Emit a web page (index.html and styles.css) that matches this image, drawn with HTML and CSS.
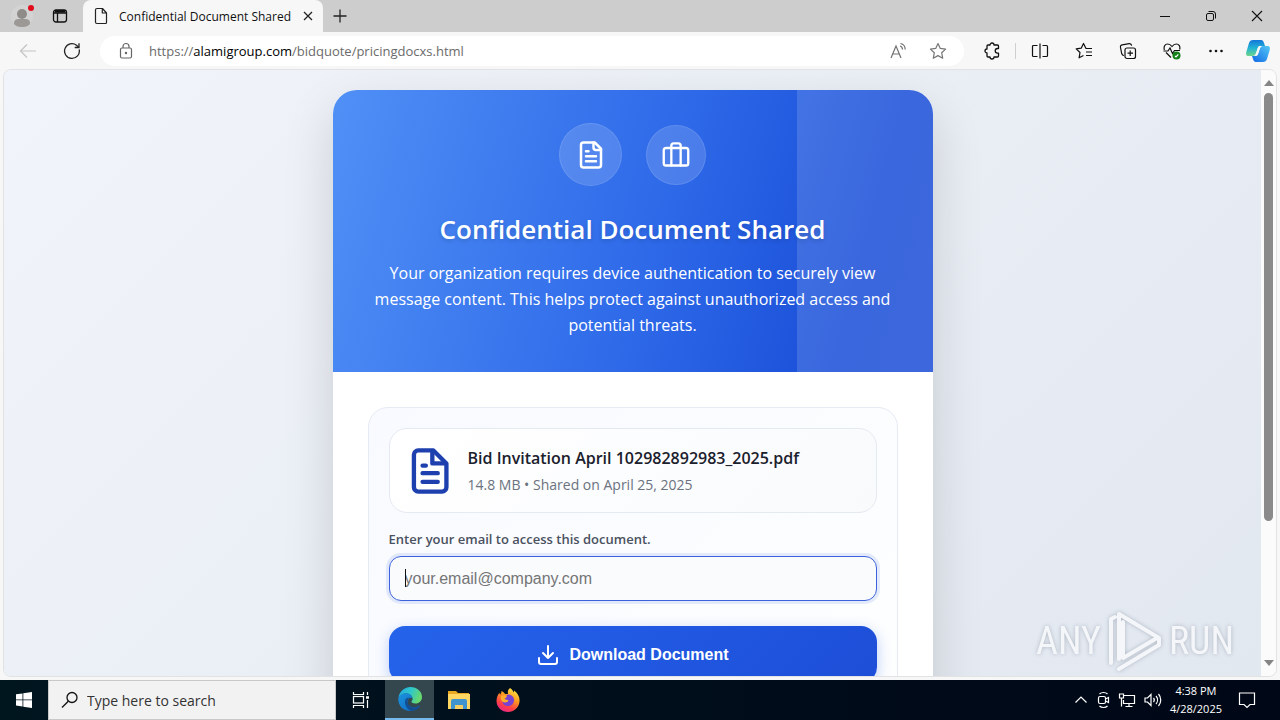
FILE: index.html
```
<!DOCTYPE html>
<html lang="en">
<head>
  <meta charset="UTF-8" />
  <meta name="viewport" content="width=device-width, initial-scale=1.0"/>
  <title>Confidential Document Shared</title>
  <link rel="stylesheet" href="styles.css">
</head>
<body>
  <!-- Tab strip -->
  <header class="tabs">
    <button class="tab-tool profile" aria-label="Profile">
      <svg width="28" height="28" viewBox="0 0 28 28"><circle cx="13" cy="14" r="11" fill="#d3d3d3"/><circle cx="13" cy="12" r="5" fill="#8f8b89"/><path d="M5 21c0-3 2-4 4-4h8c2 0 4 1 4 4 0 2.500-4 4-8 4s-8-1.500-8-4z" fill="#9c9896"/><circle cx="22" cy="6" r="3" fill="#e00b1c"/></svg>
    </button>
    <button class="tab-tool" aria-label="Tab actions">
      <svg width="16" height="16" viewBox="0 0 16 16" fill="none" stroke="#111" stroke-width="1.300"><rect x="1.500" y="2" width="13" height="12" rx="2.500"/><path d="M1.500 5h13M5.500 5v9"/><path d="M3 3.300h10" stroke-width="2.500"/></svg>
    </button>
    <div class="tab">
      <svg width="16" height="18" viewBox="0 0 16 18" fill="none" stroke="#222" stroke-width="1.200" stroke-linejoin="round"><path d="M4 1.500h5.500l4 4.500v9.500a1 1 0 0 1-1 1H4a1.500 1.500 0 0 1-1.500-1.500V3A1.500 1.500 0 0 1 4 1.500zM9.300 1.500V6h4.200"/></svg>
      <span class="tab-title">Confidential Document Shared</span>
      <button class="tab-close" aria-label="Close tab"><svg width="10" height="10" viewBox="0 0 10 10" stroke="#222" stroke-width="1.300"><path d="M1 1l8 8M9 1L1 9"/></svg></button>
    </div>
    <button class="new-tab" aria-label="New tab"><svg width="16" height="16" viewBox="0 0 16 16" stroke="#222" stroke-width="1.300"><path d="M8 1.500v13M1.500 8h13"/></svg></button>
    <div class="caption">
      <button aria-label="Minimize"><svg width="12" height="12" viewBox="0 0 12 12" stroke="#111"><path d="M1 6.500h10"/></svg></button>
      <button aria-label="Restore"><svg width="12" height="12" viewBox="0 0 12 12" fill="none" stroke="#111"><rect x="1.500" y="3.500" width="7" height="7" rx="1.500"/><path d="M3.500 1.500H8a2.500 2.500 0 0 1 2.500 2.500v4.500"/></svg></button>
      <button aria-label="Close"><svg width="12" height="12" viewBox="0 0 12 12" stroke="#111" stroke-width="1.100"><path d="M1 1l10 10M11 1L1 11"/></svg></button>
    </div>
  </header>

  <!-- Toolbar -->
  <nav class="toolbar">
    <button class="tool nav" aria-label="Back" disabled><svg width="18" height="16" viewBox="0 0 18 16" fill="none" stroke="#c4c4c4" stroke-width="1.200"><path d="M17 8H1.500M8 1.500L1.500 8 8 14.500"/></svg></button>
    <button class="tool nav" aria-label="Refresh"><svg width="18" height="18" viewBox="0 0 18 18" fill="none" stroke="#222" stroke-width="1.300"><path d="M16.200 7.500A7.400 7.400 0 1 1 13.500 3.200l2.200 2"/><path d="M16 1.200v4.300h-4.300"/></svg></button>
    <div class="address">
      <svg width="16" height="18" viewBox="0 0 16 18" fill="none" stroke="#666" stroke-width="1.200"><rect x="2.500" y="6" width="11" height="10" rx="1.500"/><path d="M5 6V4.500a3 3 0 0 1 6 0V6"/><circle cx="8" cy="11" r=".6" fill="#666"/></svg>
      <span class="url">https://<b>alamigroup.com</b>/bidquote/pricingdocxs.html</span>
      <button class="tool" aria-label="Read aloud"><svg width="18" height="18" viewBox="0 0 18 18" fill="none" stroke="#707070" stroke-width="1.200"><path d="M2 16L7 4l5 12M3.700 12h6.600M11 4c1.700.5 2.500 1.500 2.500 3.500M11.500 1.500c3 .7 4.700 2.700 4.700 6"/></svg></button>
      <button class="tool" aria-label="Add to favorites"><svg width="18" height="18" viewBox="0 0 18 18" fill="none" stroke="#777" stroke-width="1.200" stroke-linejoin="round"><path d="M9 1.500l2.300 4.900 5.300.7-3.900 3.700 1 5.400L9 13.600l-4.700 2.600 1-5.400L1.400 7.100l5.300-.7z"/></svg></button>
    </div>
    <div class="tools">
      <button class="tool ext" aria-label="Extensions"><svg width="18" height="18" viewBox="0 0 18 18" fill="none" stroke="#111" stroke-width="1.300" stroke-linejoin="round"><path d="M5 3h2a2 2 0 0 1 4 0h3.500a1 1 0 0 1 1 1v2.500h-1a2.300 2.300 0 0 0 0 4.600h1V14a1 1 0 0 1-1 1H11a2 2 0 0 1-4 0H5a1 1 0 0 1-1-1v-3a2 2 0 0 1 0-4V4a1 1 0 0 1 1-1z"/></svg></button>
      <span class="sep"></span>
      <button class="tool" aria-label="Split screen"><svg width="18" height="18" viewBox="0 0 18 18" fill="none" stroke="#111" stroke-width="1.200"><path d="M9 1.500v15M6.500 3.500h-4a1 1 0 0 0-1 1v9a1 1 0 0 0 1 1h4M11.500 3.500h4a1 1 0 0 1 1 1v9a1 1 0 0 1-1 1h-4"/></svg></button>
      <button class="tool" aria-label="Favorites"><svg width="18" height="18" viewBox="0 0 18 18" fill="none" stroke="#111" stroke-width="1.200" stroke-linejoin="round"><path d="M17 6.500h-6L8.500 1.500 6.200 6.200l-5 .7L5 10.500l-.9 5.300 4.400-2.300M11 10h6M11 13.500h6"/></svg></button>
      <button class="tool" aria-label="Collections"><svg width="18" height="18" viewBox="0 0 18 18" fill="none" stroke="#111" stroke-width="1.200"><rect x="6" y="6" width="10.500" height="10.500" rx="2"/><path d="M11.200 8.500v5.500M8.500 11.200H14M5 13.500c-1.500 0-2-.7-2.300-2L1.500 5.500C1.200 4 2 3.100 3.200 2.900l7-1.300c1.300-.2 2.200.5 2.500 2.100"/></svg></button>
      <button class="tool" aria-label="Browser essentials"><svg width="18" height="18" viewBox="0 0 18 18" fill="none" stroke="#111" stroke-width="1.200"><path d="M1.400 8C.3 4.500 2 2 4.700 2 7 2 8 3.200 9 4.500 10 3.200 11 2 13.300 2 16 2 17.500 4.500 16.600 7.500M3 10.500l5 5M.5 9H5l2-3 2.500 5.500 2-3H17"/><circle cx="13.500" cy="13.500" r="4" fill="#16801a" stroke="none"/><path d="M12 13.800l1 1 2.300-2.500" stroke="#fff"/></svg></button>
      <button class="tool" aria-label="Settings and more"><svg width="18" height="18" viewBox="0 0 18 18" fill="#111"><circle cx="3.500" cy="9" r="1.300"/><circle cx="9" cy="9" r="1.300"/><circle cx="14.500" cy="9" r="1.300"/></svg></button>
      <button class="tool copilot" aria-label="Copilot">
        <svg width="26" height="24" viewBox="0 0 26 24">
          <defs>
            <linearGradient id="cpA" x1="0" y1="0" x2="0" y2="1"><stop offset="0" stop-color="#1275d8"/><stop offset=".5" stop-color="#22b3d5"/><stop offset="1" stop-color="#6ed58a"/></linearGradient>
            <linearGradient id="cpB" x1="1" y1="0" x2="0" y2="1"><stop offset="0" stop-color="#55c8f5"/><stop offset="1" stop-color="#1168e5"/></linearGradient>
          </defs>
          <path d="M8 1h8c2 0 2.500 1.500 3 3l1 3h-4c-2 0-3 1-3.500 3l-1.500 4c-.7 2-1.500 3-3.500 3H3.500C1 17 .8 15 1.300 13L4 4c.6-2 2-3 4-3z" fill="url(#cpA)"/>
          <path d="M18 7h4.500c2.500 0 2.700 2 2.200 4L22 20c-.6 2-2 3-4 3h-7c-2 0-2.500-1.500-3-3l-1-3h2.500c2 0 3-1 3.500-3l1.500-4c.7-2 1.500-3 3.500-3z" fill="url(#cpB)"/>
          <path d="M14 7h3c-1.500 1-2 2-2.500 4l-1.300 4c-.5 1.500-1.500 2-3 2l2-6c.4-1.800.8-3 1.800-4z" fill="#f7f7f7"/>
        </svg>
      </button>
    </div>
  </nav>

  <!-- Page -->
  <div class="frame">
    <main class="page">
      <section class="card">
        <div class="hero">
          <div class="badges">
            <span class="badge large"><svg width="30" height="30" viewBox="0 0 24 24" fill="none" stroke="#fff" stroke-width="2" stroke-linecap="round" stroke-linejoin="round"><path d="M15 2H6a2 2 0 0 0-2 2v16a2 2 0 0 0 2 2h12a2 2 0 0 0 2-2V7z"/><path d="M14 2v4a2 2 0 0 0 2 2h4M16 13H8M16 17H8M10 9H8"/></svg></span>
            <span class="badge"><svg width="28" height="28" viewBox="0 0 24 24" fill="none" stroke="#fff" stroke-width="2" stroke-linecap="round" stroke-linejoin="round"><rect x="1.500" y="6" width="21" height="15" rx="2"/><path d="M16 21V4a2 2 0 0 0-2-2h-4a2 2 0 0 0-2 2v17"/></svg></span>
          </div>
          <h1>Confidential Document Shared</h1>
          <p>Your organization requires device authentication to securely view message content. This helps protect against unauthorized access and potential threats.</p>
        </div>
        <div class="content">
          <form class="panel">
            <div class="file">
              <svg width="52" height="52" viewBox="0 0 24 24" fill="none" stroke="#1e40af" stroke-width="2" stroke-linecap="round" stroke-linejoin="round"><path d="M14.500 2.500h-7a2 2 0 0 0-2 2v15a2 2 0 0 0 2 2h11a2 2 0 0 0 2-2v-11z"/><path d="M14 3v5.500h6M16.500 13h-7M16.500 17h-7M11 9.500H9.500"/></svg>
              <div>
                <div class="file-name">Bid Invitation April 102982892983_2025.pdf</div>
                <div class="file-meta">14.8 MB • Shared on April 25, 2025</div>
              </div>
            </div>
            <label for="email">Enter your email to access this document.</label>
            <div class="field">
              <input type="email" id="email" placeholder="your.email@company.com">
              <span class="caret"></span>
            </div>
            <button type="button" class="download">
              <svg width="24" height="24" viewBox="0 0 24 24" fill="none" stroke="#fff" stroke-width="2" stroke-linecap="round" stroke-linejoin="round"><path d="M21 15v4a2 2 0 0 1-2 2H5a2 2 0 0 1-2-2v-4M7 10l5 5 5-5M12 15V3"/></svg>
              Download Document
            </button>
          </form>
        </div>
      </section>
    </main>
    <div class="scrollbar">
      <svg width="10" height="6" viewBox="0 0 10 6" fill="#858585"><path d="M5 0l5 6H0z"/></svg>
      <span class="thumb"></span>
      <svg width="10" height="6" viewBox="0 0 10 6" fill="#858585"><path d="M0 0h10L5 6z"/></svg>
    </div>
    <div class="watermark">
      <span>ANY</span>
      <svg width="60" height="64" viewBox="0 0 60 64" fill="none" stroke="#fff" stroke-width="4" stroke-linejoin="round" stroke-linecap="round"><path d="M6 54V10l4-2M14 50V5l40 24M18 13v36l34-20M14 60l40-24v-7"/></svg>
      <span>RUN</span>
    </div>
  </div>

  <!-- Taskbar -->
  <footer class="taskbar">
    <button class="task start" aria-label="Start"><svg width="16" height="16" viewBox="0 0 16 16" fill="#fff"><path d="M0 2.300l6.500-.9v6.100H0zM7.300 1.300L16 0v7.500H7.300zM0 8.300h6.500v6.100L0 13.600zM7.300 8.300H16V16l-8.700-1.300z"/></svg></button>
    <div class="search">
      <svg width="18" height="18" viewBox="0 0 18 18" fill="none" stroke="#111" stroke-width="1.300"><circle cx="11" cy="6.500" r="5"/><path d="M7.300 10.200L1 16.500"/></svg>
      <input type="text" placeholder="Type here to search" aria-label="Search">
    </div>
    <button class="task" aria-label="Task view"><svg width="18" height="18" viewBox="0 0 18 18" fill="none" stroke="#fff" stroke-width="1.200"><path d="M1.500 1v2.500h10V1M1.500 17v-2.500h10V17M15.500 1v3M15.500 9v8"/><rect x="1.500" y="5.500" width="10" height="6.500"/><path d="M14 6.500h3" stroke-width="2.500"/></svg></button>
    <button class="task active" aria-label="Microsoft Edge">
      <svg width="24" height="24" viewBox="0 0 24 24">
        <defs>
          <linearGradient id="edA" x1="0" y1="0" x2="1" y2=".3"><stop offset="0" stop-color="#20a5e5"/><stop offset=".55" stop-color="#2fc8ca"/><stop offset="1" stop-color="#65d870"/></linearGradient>
          <linearGradient id="edB" x1="0" y1="0" x2="1" y2="1"><stop offset="0" stop-color="#1b94dd"/><stop offset="1" stop-color="#0f65c0"/></linearGradient>
        </defs>
        <path d="M.5 11C1 5 6 0 12.500 0 19 0 24 4.500 24 10c0 4-3 6.500-6.500 6.500-3 0-4.500-1-4-2.200 1-1 1.200-2 1-3C14 8 11 6.500 8 6.500 4.500 6.500 1.500 8.500.5 11z" fill="url(#edA)"/>
        <path d="M.3 12C.8 8.500 4 6.300 8 6.300c3.500 0 6 2 6.500 4.700-3-1-5 1.500-5 4 0 4 4.500 6.500 9 5 1.500-.4 2.500-1.200 3.200-1.200C20 22 16 24 12.200 24 5.500 24 0 19 .3 12z" fill="url(#edB)"/>
        <path d="M7.500 12.500c-1.500 4 .5 9 5.500 11.400C18 23.800 21 21 22 19c-1 0-2 1-4 1.300-4 .7-8-1.300-8.500-5.300-.2-2 .8-3.700 2.300-4.200-2-.2-3.700.5-4.300 1.700z" fill="#124e91"/>
      </svg>
    </button>
    <button class="task" aria-label="File Explorer"><svg width="22" height="20" viewBox="0 0 22 20"><path d="M0 1h8l2 2h11v16H0z" fill="#e8a821"/><path d="M0 4h22v15H0z" fill="#ffd662"/><path d="M3 19v-8a2 2 0 0 1 2-2h12a2 2 0 0 1 2 2v8h-4v-4H7v4z" fill="#3f93cf"/><path d="M7 15h8v3H7z" fill="#f4cd64"/></svg></button>
    <button class="task" aria-label="Firefox">
      <svg width="24" height="24" viewBox="0 0 24 24">
        <defs><linearGradient id="ffA" x1=".8" y1="0" x2=".3" y2="1"><stop offset="0" stop-color="#fff04a"/><stop offset=".4" stop-color="#ff9b1f"/><stop offset=".75" stop-color="#ff3e46"/><stop offset="1" stop-color="#e7258b"/></linearGradient></defs>
        <path d="M14 0c2 1 3 3 3.500 4.500C18 4 18 3 18 2.500c4 3 6 6.500 5.500 11C23 19.500 18 24 12 24S.5 19.500.5 13c0-3 1-6 3-8.500 0 1 .2 1.700.5 2.200C5 5.500 5.500 4.500 5.500 3c2 1 3 2 3.500 3h3c-.5-2 0-4.500 2-6z" fill="url(#ffA)"/>
        <path d="M12 6.500c4 0 6.500 3 6 6.500-.5 3-3 5-6 5s-5.500-2-5.700-5c2 1.300 4 1.500 6 0-1.500-.3-2.500-.8-4-1-.5-2 1-4 3.700-5.500z" fill="#7943d1"/>
        <path d="M5 8c2-1 4-1 6 0-.3 1.500-2 2-2.500 3 1.500.5 2.500 1 4 1.200-1 2.500-4 3-6.500 1C5 12 4.500 10 5 8z" fill="#ffae2b"/>
      </svg>
    </button>
    <div class="tray">
      <svg width="14" height="14" viewBox="0 0 14 14" fill="none" stroke="#fff" stroke-width="1.200"><path d="M1.500 9.500L7 4l5.500 5.500"/></svg>
      <svg width="14" height="18" viewBox="0 0 14 18" fill="none" stroke="#fff" stroke-width="1.200"><rect x="2.500" y="5.500" width="7" height="7" rx="1.500"/><path d="M9.500 8l3-1.500v5l-3-1.500M3.500 3c2-2 6-2 8 0M3.500 15c2 2 6 2 8 0"/></svg>
      <svg width="18" height="16" viewBox="0 0 18 16" fill="none" stroke="#fff" stroke-width="1.200"><path d="M6 3.500h10.500v8H5.500V8M11 11.500V14M7.500 14.500h7M1.500 2h4v4h-4zM3.500 6v8.500"/></svg>
      <svg width="18" height="16" viewBox="0 0 18 16" fill="none" stroke="#fff" stroke-width="1.200"><path d="M1 6h2.500L7 2.500v11L3.500 10H1zM9.500 6c1 1.200 1 2.800 0 4M12 4c2 2.300 2 5.700 0 8M14.500 2c3 3.500 3 8.500 0 12"/></svg>
      <div class="clock"><span>4:38 PM</span><span>4/28/2025</span></div>
      <svg class="notify" width="18" height="18" viewBox="0 0 18 18" fill="none" stroke="#fff" stroke-width="1.200"><path d="M1.500 2h15v11.500H12L9 16.500l-3-3H1.500z"/></svg>
    </div>
  </footer>
</body>
</html>
```
FILE: styles.css
```
* {
  box-sizing: border-box;
}

body {
  margin: 0;
  height: 100vh;
  display: flex;
  flex-direction: column;
  overflow: hidden;
  background: #f7f7f7;
  font-family: "Open Sans", "Noto Sans", sans-serif;
}

button {
  border: 0;
  padding: 0;
  background: none;
  display: flex;
  align-items: center;
  justify-content: center;
}

svg {
  flex: none;
}

/* tab strip */
.tabs {
  display: flex;
  align-items: stretch;
  height: 32px;
  background: #cdcdcd;
  flex: none;
}

.tab-tool {
  width: 36px;
}

.profile {
  width: 42px;
  padding-left: 4px;
}

.tab {
  display: flex;
  align-items: center;
  width: 240px;
  margin-left: 5px;
  padding: 0 10px;
  background: #f7f7f7;
  border-radius: 8px 8px 0 0;
}

.tab-title {
  flex: 1;
  margin-left: 10px;
  font-size: 12px;
  color: #111;
  white-space: nowrap;
}

.tab-close {
  width: 10px;
}

.new-tab {
  width: 34px;
}

.caption {
  display: flex;
  margin-left: auto;
}

.caption button {
  width: 46px;
}

/* toolbar */
.toolbar {
  display: flex;
  align-items: center;
  height: 37px;
  padding: 0 2px 0 6px;
  flex: none;
}

.tool {
  width: 44px;
  height: 30px;
}

.address {
  flex: 1;
  display: flex;
  align-items: center;
  height: 30px;
  margin-left: 6px;
  padding: 0 6px 0 18px;
  background: #fff;
  border-radius: 15px;
}

.address .tool {
  width: 40px;
}

.url {
  flex: 1;
  margin-left: 15px;
  font-size: 13px;
  color: #6b6b6b;
}

.url b {
  font-weight: 400;
  color: #000;
}

.tools {
  display: flex;
  align-items: center;
  margin-left: 6px;
}

.sep {
  width: 1px;
  height: 16px;
  margin: 0 2px 0 1px;
  background: #cfcfcf;
}

.copilot {
  width: 40px;
}

/* page frame */
.frame {
  position: relative;
  flex: 1;
  min-height: 0;
  display: flex;
  margin: 0 3px 3px;
  border: 1px solid #e0e2e4;
  border-radius: 8px;
  overflow: hidden;
}

.page {
  flex: 1;
  padding: 20px;
  overflow: hidden;
  background: linear-gradient(135deg, #f1f4fa 0%, #e2e8f0 100%);
}

.card {
  max-width: 600px;
  margin: 0 auto;
  background: #fff;
  border-radius: 24px;
  overflow: hidden;
  box-shadow: 0 20px 50px rgba(0, 0, 0, 0.15);
}

.hero {
  position: relative;
  padding: 33px 40px 34px;
  text-align: center;
  color: #fff;
  background: linear-gradient(105deg, #5090f6 0%, #2d68e8 55%, #1a4fd8 85%, #1d4ed8 100%);
}

/* lighter band on the right of the hero */
.hero::after {
  content: "";
  position: absolute;
  top: 0;
  right: 0;
  width: 136px;
  height: 100%;
  background: rgba(255, 255, 255, 0.14);
}

.badges {
  display: flex;
  align-items: center;
  justify-content: center;
  gap: 24px;
}

.badge {
  display: flex;
  align-items: center;
  justify-content: center;
  width: 60px;
  height: 60px;
  border: 1px solid rgba(255, 255, 255, 0.1);
  border-radius: 50%;
  background: rgba(255, 255, 255, 0.15);
}

.badge.large {
  width: 63px;
  height: 63px;
}

.hero h1 {
  position: relative;
  z-index: 1;
  margin: 23px 0 11px;
  font-size: 26px;
  line-height: 40px;
  font-weight: 600;
  text-shadow: 0 2px 4px rgba(0, 0, 0, 0.15);
}

.hero p {
  position: relative;
  z-index: 1;
  margin: 0;
  font-size: 16px;
  line-height: 26px;
  font-weight: 500;
}

.content {
  padding: 35px;
}

.panel {
  padding: 20px;
  border: 1px solid #e5eaf3;
  border-radius: 20px;
  background: linear-gradient(135deg, #f9faff, #fdfefe);
}

.file {
  display: flex;
  align-items: center;
  gap: 14px;
  height: 85px;
  padding: 0 12px;
  border: 1px solid #e5e9f1;
  border-radius: 18px;
  background: linear-gradient(135deg, #fff, #f8fafc);
}

.file-name {
  font-size: 16px;
  line-height: 24px;
  font-weight: 600;
  color: #1a202c;
}

.file-meta {
  margin-top: 4px;
  font-size: 14px;
  line-height: 22px;
  color: #6b7280;
}

.panel label {
  display: block;
  margin: 16px 0 7px;
  font-size: 13px;
  line-height: 20px;
  font-weight: 600;
  color: #4a5160;
}

.field {
  position: relative;
}

.field input {
  display: block;
  width: 100%;
  height: 45px;
  padding: 0 15px;
  border: 1px solid #3d63dc;
  border-radius: 12px;
  outline: 0;
  background: #f9fbfd;
  box-shadow: 0 0 0 3px rgba(59, 110, 235, 0.13);
  font-family: "Liberation Sans", Arial, sans-serif;
  font-size: 16px;
}

.field input::placeholder {
  color: #757575;
}

.caret {
  position: absolute;
  left: 16px;
  top: 13px;
  width: 1px;
  height: 18px;
  background: #111;
}

.download {
  gap: 9px;
  width: 100%;
  height: 57px;
  margin-top: 25px;
  border-radius: 16px;
  background: linear-gradient(135deg, #2563eb, #1d4ed8);
  box-shadow: 0 4px 14px rgba(37, 99, 235, 0.3);
  color: #fff;
  font-family: "Liberation Sans", Arial, sans-serif;
  font-size: 16px;
  font-weight: 700;
}

.scrollbar {
  display: flex;
  flex-direction: column;
  align-items: center;
  width: 15px;
  padding: 10px 0;
  background: #fbfbfb;
}

.thumb {
  width: 9px;
  height: 73%;
  margin: 7px 0 auto;
  border-radius: 5px;
  background: #8a8a8a;
}

.watermark {
  position: absolute;
  right: 42px;
  bottom: 3px;
  display: flex;
  align-items: center;
  gap: 4px;
  color: #fff;
  opacity: 0.6;
  font-family: "Liberation Sans Narrow", "Roboto Condensed", "Liberation Sans", sans-serif;
  font-size: 38px;
  filter: drop-shadow(0 0 2px rgba(80, 90, 110, 0.6));
}

/* taskbar */
.taskbar {
  display: flex;
  height: 40px;
  flex: none;
  background: linear-gradient(90deg, #00161f, #000c1a 60%, #000716);
}

.task {
  width: 49px;
}

.task.start {
  width: 48px;
}

.task.active {
  background: #34474e;
  border-bottom: 2px solid #76b9ed;
}

.search {
  display: flex;
  align-items: center;
  width: 288px;
  padding: 0 12px;
  background: #f2f2f2;
  border: 1px solid #c8c8c8;
}

.search input {
  flex: 1;
  min-width: 0;
  margin-left: 8px;
  padding: 0;
  border: 0;
  outline: 0;
  background: none;
  font-family: inherit;
  font-size: 14px;
}

.search input::placeholder {
  color: #333;
}

.tray {
  display: flex;
  align-items: center;
  gap: 8px;
  margin-left: auto;
  padding-right: 24px;
  color: #fff;
}

.clock {
  display: flex;
  flex-direction: column;
  align-items: center;
  font-size: 11px;
  line-height: 18px;
}

.notify {
  margin-left: 8px;
}
```
